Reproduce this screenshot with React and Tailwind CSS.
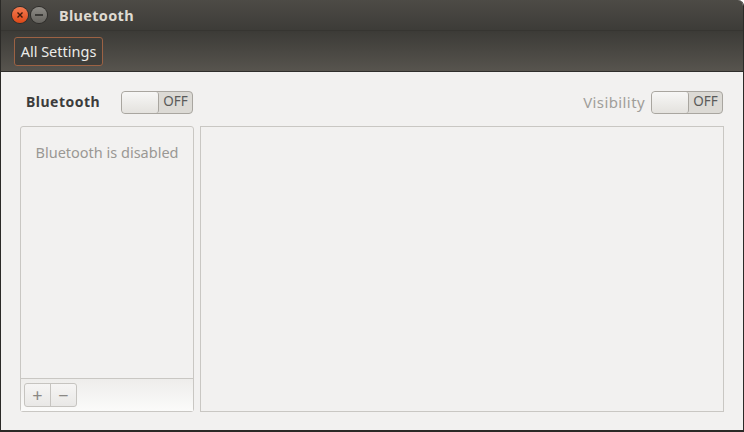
import React from "react";

function Switch() {
  return (
    <div className="flex h-[23px] w-[72px] overflow-hidden rounded-[4px] border border-[#a9a6a0] bg-[#dcdad5]">
      <div className="w-[37px] rounded-[3px] border-r border-[#a9a6a0] bg-gradient-to-b from-[#f7f7f6] to-[#e4e2de]" />
      <div className="flex flex-1 items-center justify-center text-[13.5px] text-[#5a5a5a]">OFF</div>
    </div>
  );
}

export default function App() {
  return (
    <div
      className="flex h-[432px] w-[744px] flex-col overflow-hidden rounded-tr-[6px] border-x border-b-2 border-[#2b2a27] bg-[#f2f1f0] text-[14px] leading-none"
      style={{ fontFamily: '"Noto Sans", "Open Sans", sans-serif' }}
    >
      <div className="flex h-[31px] items-center border-b border-[#363531] bg-gradient-to-b from-[#4d4b46] to-[#3d3c38] pl-[11px]">
        <div className="flex h-[16px] w-[16px] items-center justify-center rounded-full bg-gradient-to-b from-[#f47a4f] to-[#dd4814] shadow-[0_0_0_1px_#2e2d2a]">
          <svg width="8" height="8" viewBox="0 0 8 8">
            <path d="M1.5 1.5 L6.5 6.5 M6.5 1.5 L1.5 6.5" stroke="#3c1a0c" strokeWidth="1.4" />
          </svg>
        </div>
        <div className="ml-[3px] flex h-[16px] w-[16px] items-center justify-center rounded-full bg-gradient-to-b from-[#8e8c87] to-[#65635e] shadow-[0_0_0_1px_#2e2d2a]">
          <div className="h-[1.5px] w-[8px] bg-[#3a3936]" />
        </div>
        <span className="ml-[12px] mt-[1px] text-[14.5px] font-bold tracking-[0.3px] text-[#dfdbd2]">Bluetooth</span>
      </div>
      <div className="flex h-[41px] items-center border-b border-[#2f2e2b] bg-gradient-to-b from-[#3c3b37] to-[#57544e] pl-[13px]">
        <div className="flex h-[29px] w-[89px] items-center justify-center rounded-[3px] border border-[#9c6244] bg-[#3f3e3a] text-[14.5px] text-[#ecebe8]">
          All Settings
        </div>
      </div>
      <div className="flex flex-1 flex-col px-[19px] pb-[18px]">
        <div className="flex h-[54px] items-center pr-[1px] pt-[6px]">
          <span className="ml-[6px] w-[95px] text-[14px] font-bold tracking-[0.5px] text-[#3c3c3c]">Bluetooth</span>
          <Switch />
          <span className="ml-auto mr-[6px] text-[15px] tracking-[0.4px] text-[#a09e9a]">Visibility</span>
          <Switch />
        </div>
        <div className="flex flex-1 gap-[6px]">
          <div className="flex w-[174px] flex-col rounded-[3px] border border-[#c9c7c3]">
            <div className="flex-1 pt-[18px] text-center text-[14.5px] text-[#9a9894]">Bluetooth is disabled</div>
            <div className="flex h-[33px] items-center border-t border-[#c9c7c3] bg-gradient-to-b from-[#eeedeb] to-[#fbfbfa] pl-[3px]">
              <div className="flex h-[24px] overflow-hidden rounded-[3px] border border-[#c6c4c0] bg-gradient-to-b from-[#f6f5f4] to-[#e9e8e6]">
                <div className="flex w-[26px] items-center justify-center border-r border-[#c6c4c0] text-[18px] text-[#8a8884]">+</div>
                <div className="flex w-[25px] items-center justify-center text-[18px] text-[#8a8884]">−</div>
              </div>
            </div>
          </div>
          <div className="flex-1 border border-[#c9c7c3]" />
        </div>
      </div>
    </div>
  );
}
